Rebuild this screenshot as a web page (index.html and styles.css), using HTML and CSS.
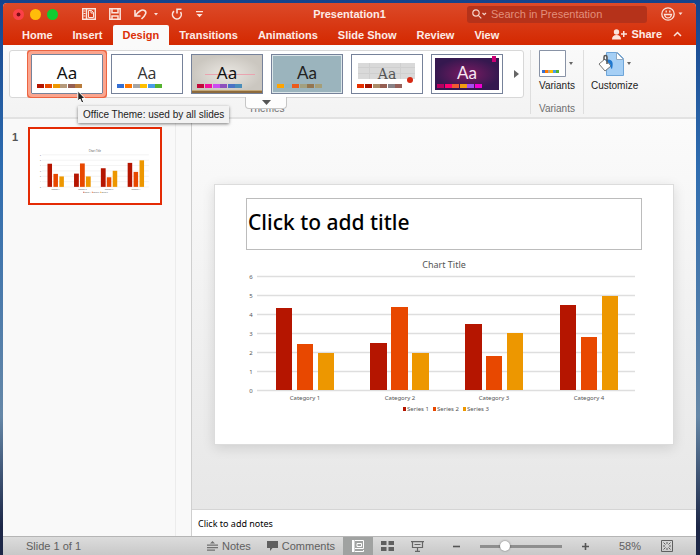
FILE: index.html
```html
<!DOCTYPE html>
<html lang="en">
<head>
<meta charset="UTF-8">
<meta name="viewport" content="width=device-width, initial-scale=1.0">
<title>Presentation1</title>
<link rel="stylesheet" href="styles.css">
</head>
<body>

<div class="window">
  <header class="top">
    <div class="titlebar">
      <div class="lights">
        <button class="light close" aria-label="Close"></button>
        <button class="light minimize" aria-label="Minimize"></button>
        <button class="light zoom" aria-label="Zoom"></button>
      </div>
      <div class="quick">
        <button aria-label="New from template">
          <svg width="14" height="12" viewBox="0 0 14 12" fill="none" stroke="#fbe3dc">
            <path stroke-width="1.4" d="M.7.7h12.6v10.6H.7zM4.5.7v10.6"/>
            <path d="M6.500 2.500h3l2 2v5h-5zM9 2.500v2.500h2.500M1.500 3h2M1.500 5.500h2M1.500 8h2"/>
          </svg>
        </button>
        <button aria-label="Save">
          <svg width="12" height="12" viewBox="0 0 12 12" fill="none" stroke="#fbe3dc" stroke-width="1.5">
            <path d="M.8.8h10.400v10.400H.8zM3 .8v4h6v-4M3 11.200V8h6v3.200"/>
          </svg>
        </button>
        <button aria-label="Undo">
          <svg width="24" height="12" viewBox="0 0 24 12" fill="none" stroke="#fbe3dc" stroke-width="1.6">
            <path d="M1 2v6h5.500M1.500 7.500C4 3.500 8 1 10.500 2.500S12 7 7.500 11"/>
            <path fill="#fbe3dc" stroke="none" d="M20 5h4l-2 2.500z"/>
          </svg>
        </button>
        <button aria-label="Repeat">
          <svg width="12" height="12" viewBox="0 0 12 12" fill="none" stroke="#fbe3dc" stroke-width="1.6">
            <path d="M3 3.200a4.400 4.400 0 1 0 6.500.8M6 5.500V1.200h4.500"/>
          </svg>
        </button>
        <button aria-label="Customize toolbar">
          <svg width="7" height="7" viewBox="0 0 7 7" fill="#fbe3dc"><path d="M0 0h7v1.200H0zM.5 3h6l-3 3.200z"/></svg>
        </button>
      </div>
      <h1 class="doc-title">Presentation1</h1>
      <label class="search">
        <svg width="15" height="10" viewBox="0 0 15 10" fill="none" stroke="#f6d3c9" stroke-width="1.200">
          <circle cx="4" cy="4" r="3.200"/><path d="M6.300 6.300l3 3M10.500 4l1.700 1.700L14 4"/>
        </svg>
        <input type="search" aria-label="Search in Presentation" placeholder="Search in Presentation">
      </label>
      <button class="smiley" aria-label="Feedback">
        <svg width="22" height="14" viewBox="0 0 22 14" fill="none" stroke="#fbe3dc" stroke-width="1.300">
          <circle cx="7" cy="7" r="6.200"/><path d="M3.500 7.500c.8 4.500 6.200 4.500 7 0z"/>
          <path d="M5.200 3.500v2M8.800 3.500v2"/><path fill="#fbe3dc" stroke="none" d="M17.500 5.500h4l-2 2.500z"/>
        </svg>
      </button>
    </div>

    <nav class="tabs">
      <button class="tab">Home</button>
      <button class="tab">Insert</button>
      <button class="tab active">Design</button>
      <button class="tab">Transitions</button>
      <button class="tab">Animations</button>
      <button class="tab">Slide Show</button>
      <button class="tab">Review</button>
      <button class="tab">View</button>
      <button class="share">
        <svg width="15" height="11" viewBox="0 0 15 11" fill="#fbe3dc">
          <circle cx="4.500" cy="3" r="2.700"/><path d="M0 10.500c0-3 1.500-4.500 4.500-4.500S9 7.500 9 10.500z"/><path d="M11 2h1.500v2.300H15v1.400h-2.500V8H11V5.700H9V4.300h2z"/>
        </svg>
        Share
      </button>
      <button class="collapse" aria-label="Collapse ribbon">
        <svg width="9" height="6" viewBox="0 0 9 6" fill="none" stroke="#fbe3dc" stroke-width="1.500"><path d="M1 5l3.500-3.500L8 5"/></svg>
      </button>
    </nav>
  </header>

  <section class="ribbon">
    <div class="group themes">
      <div class="gallery">
        <button class="theme selected" aria-label="Office Theme">
          <svg viewBox="0 0 70 38">
            <rect width="70" height="38" fill="#fff"/>
            <text class="aa noto" x="35" y="24">Aa</text>
            <path fill="#b51500" d="M5 29h7v4H5z"/><path fill="#e84800" d="M13 29h7v4h-7z"/><path fill="#ed9700" d="M21 29h7v4h-7z"/>
            <path fill="#b69a7c" d="M28 29h7v4h-7z"/><path fill="#955f53" d="M36 29h7v4h-7z"/><path fill="#b97c3c" d="M43 29h7v4h-7z"/>
          </svg>
        </button>
        <button class="theme" aria-label="Office Theme, blue">
          <svg viewBox="0 0 70 38">
            <rect width="70" height="38" fill="#fff"/>
            <text class="aa light-face" x="35" y="24">Aa</text>
            <path fill="#356fd3" d="M5 29h7v4H5z"/><path fill="#ff7800" d="M13 29h7v4h-7z"/><path fill="#a5a5a5" d="M21 29h7v4h-7z"/>
            <path fill="#ffc000" d="M28 29h7v4h-7z"/><path fill="#4a9be8" d="M36 29h7v4h-7z"/><path fill="#55b32f" d="M43 29h7v4h-7z"/>
          </svg>
        </button>
        <button class="theme" aria-label="Gallery">
          <svg viewBox="0 0 70 38">
            <defs><radialGradient id="wall"><stop stop-color="#ebe8e3"/><stop offset="1" stop-color="#cbc7c0"/></radialGradient></defs>
            <rect width="70" height="38" fill="url(#wall)"/>
            <path fill="#8d6b3d" d="M0 35h70v3H0z"/><path fill="#c3a777" d="M0 35h70v1H0z"/>
            <path stroke="#e9a4b0" d="M13 19.500h50"/>
            <text class="aa noto" x="35" y="24">Aa</text>
            <path fill="#c2073a" d="M5 29h7v4H5z"/><path fill="#f0119c" d="M13 29h7v4h-7z"/><path fill="#cb4cf2" d="M21 29h7v4h-7z"/>
            <path fill="#8e50bd" d="M28 29h7v4h-7z"/><path fill="#4a72c5" d="M36 29h7v4h-7z"/><path fill="#4a8dba" d="M43 29h7v4h-7z"/>
          </svg>
        </button>
        <button class="theme" aria-label="Parcel">
          <svg viewBox="0 0 70 38">
            <path fill="#dbe6e9" d="M0 0h70v38H0z"/><path fill="#9bb4bd" d="M1 1h68v36H1z"/>
            <text class="aa gill" x="35" y="24">Aa</text>
            <path fill="#ffa300" d="M5 29h7v4H5z"/><path fill="#8fb3c2" d="M13 29h7v4h-7z"/><path fill="#eb5a1d" d="M20 29h7v4h-7z"/>
            <path fill="#a2a080" d="M28 29h7v4h-7z"/><path fill="#94764f" d="M35 29h7v4h-7z"/><path fill="#a59e78" d="M43 29h7v4h-7z"/>
          </svg>
        </button>
        <button class="theme" aria-label="Wood Type">
          <svg viewBox="0 0 70 38">
            <rect width="70" height="38" fill="#fff"/><path fill="#d9d9d9" d="M6 8h57v16H6z"/>
            <path stroke="#cfcfcf" d="M6 12.500h57M6 18.500h57M17.500 8v16M48.500 8v16"/>
            <text class="aa slab" x="35" y="24">Aa</text>
            <path fill="#e63000" d="M5 29h7v4H5z"/><path fill="#a51300" d="M13 29h7v4h-7z"/><path fill="#aa8c68" d="M21 29h7v4h-7z"/>
            <path fill="#955f53" d="M28 29h7v4h-7z"/><path fill="#888287" d="M36 29h7v4h-7z"/><path fill="#96605a" d="M43 29h7v4h-7z"/>
            <circle cx="58" cy="25" r="3" fill="#d62914"/>
          </svg>
        </button>
        <button class="theme" aria-label="Ion Boardroom">
          <svg viewBox="0 0 70 38">
            <defs><radialGradient id="ion"><stop stop-color="#7b1a62"/><stop offset="1" stop-color="#35184f"/></radialGradient></defs>
            <rect width="70" height="38" fill="#fff"/><path fill="url(#ion)" d="M3 3h64v32H3z"/>
            <text class="aa inverse" x="35" y="24">Aa</text>
            <path fill="#b8005f" d="M5 29h7v4H5z"/><path fill="#ff0071" d="M13 29h7v4h-7z"/><path fill="#f25a32" d="M20 29h7v4h-7z"/>
            <path fill="#f39c12" d="M28 29h7v4h-7z"/><path fill="#a64ef0" d="M35 29h7v4h-7z"/><path fill="#f000d0" d="M43 29h7v4h-7z"/>
            <path fill="#c90075" d="M60 1h4v6h-4z"/>
          </svg>
        </button>
        <button class="next" aria-label="More themes">
          <svg width="5" height="8" viewBox="0 0 5 8" fill="#666"><path d="M0 0l5 4-5 4z"/></svg>
        </button>
      </div>
      <span class="group-name">Themes</span>
      <button class="expand" aria-label="Show all themes">
        <svg width="9" height="5" viewBox="0 0 9 5" fill="#555"><path d="M0 0h9L4.500 5z"/></svg>
      </button>
      <div class="tooltip" role="tooltip">Office Theme: used by all slides</div>
      <svg class="cursor" width="9" height="14" viewBox="0 0 9 14"><path fill="#222" stroke="#fff" d="M.8 1v10l2.300-2 1.600 4 2-1-1.600-3.500h3z"/></svg>
    </div>
    <div class="group variants">
      <button class="big">
        <svg width="35" height="27" viewBox="0 0 35 27">
          <path fill="#fff" stroke="#8993a6" d="M.5.5h26v26H.5z"/>
          <path fill="#356fd3" d="M3 20h3v3H3z"/><path fill="#ff7800" d="M6 20h3v3H6z"/><path fill="#a5a5a5" d="M9 20h2v3H9z"/>
          <path fill="#ffc000" d="M11 20h3v3h-3z"/><path fill="#4a9be8" d="M14 20h3v3h-3z"/><path fill="#55b32f" d="M17 20h3v3h-3z"/>
          <path fill="#666" d="M30 12h4l-2 3z"/>
        </svg>
        Variants
      </button>
      <span class="group-name">Variants</span>
    </div>
    <div class="group customize">
      <button class="big">
        <svg width="34" height="27" viewBox="0 0 34 27">
          <path fill="#a5cff5" stroke="#6ea5d8" d="M8.500 2.500h11l6 6v17h-17z"/><path fill="#fff" stroke="#8fa9c2" d="M18.500 2.500v7h7z"/>
          <path fill="#fff" stroke="#777" d="M1 14l6-5 6 7-6 5z"/><path fill="#1f78cf" d="M7 10c7-2 9 2 7 9-2-1-1-4-2-5z"/>
          <path fill="none" stroke="#555" stroke-width="1.500" d="M9 14V7c0-2-3-2-3 0v3"/>
          <path fill="#666" d="M29 12h4l-2 3z"/>
        </svg>
        Customize
      </button>
    </div>
  </section>

  <main class="workspace">
    <aside class="slides">
      <span class="slide-number">1</span>
      <button class="thumb" aria-label="Slide 1">
        <svg viewBox="0 0 460 262"><use href="#chart" x="32" y="65"/></svg>
      </button>
    </aside>
    <div class="scroller"></div>
    <div class="editor">
      <div class="canvas">
        <article class="slide">
          <div class="title-box">Click to add title</div>
          <svg class="chart" viewBox="0 0 396 194" role="img" aria-label="Chart Title">
            <!-- also drawn in the slide thumbnail -->
            <g id="chart">
              <path stroke="#dedede" stroke-width="1.300" d="M11 26.500H389M11 45.500H389M11 64.500H389M11 83.500H389M11 102.500H389M11 121.500H389M11 140.500H389"/>
              <g fill="#b51500">
                <rect x="30" y="58" width="16" height="82"/>
                <rect x="124" y="93" width="17" height="47"/>
                <rect x="219" y="74" width="17" height="66"/>
                <rect x="314" y="55" width="16" height="85"/>
              </g>
              <g fill="#e84800">
                <rect x="51" y="94" width="16" height="46"/>
                <rect x="145" y="57" width="17" height="83"/>
                <rect x="240" y="106" width="16" height="34"/>
                <rect x="335" y="87" width="16" height="53"/>
              </g>
              <g fill="#ed9700">
                <rect x="72" y="103" width="16" height="37"/>
                <rect x="166" y="103" width="17" height="37"/>
                <rect x="261" y="83" width="16" height="57"/>
                <rect x="356" y="46" width="16" height="94"/>
              </g>
              <g class="chart-text">
                <text class="chart-title" x="198" y="18">Chart Title</text>
                <text x="5" y="29">6</text>
                <text x="5" y="48">5</text>
                <text x="5" y="67">4</text>
                <text x="5" y="86">3</text>
                <text x="5" y="105">2</text>
                <text x="5" y="124">1</text>
                <text x="5" y="143">0</text>
                <text x="59" y="150">Category 1</text>
                <text x="154" y="150">Category 2</text>
                <text x="248" y="150">Category 3</text>
                <text x="343" y="150">Category 4</text>
                <text x="172" y="161">Series 1</text>
                <text x="202" y="161">Series 2</text>
                <text x="232" y="161">Series 3</text>
              </g>
              <path fill="#b51500" d="M157 157h3v4h-3z"/>
              <path fill="#e84800" d="M187 157h3v4h-3z"/>
              <path fill="#ed9700" d="M217 157h3v4h-3z"/>
            </g>
          </svg>
        </article>
      </div>
      <div class="notes">Click to add notes</div>
    </div>
  </main>

  <footer class="status">
    <span class="count">Slide 1 of 1</span>
    <button class="notes-button">
      <svg width="11" height="10" viewBox="0 0 11 10" fill="#707070"><path d="M5.500 0L8 2.500H3zM0 3.500h11v1.200H0zM0 6h11v1.200H0zM0 8.500h8v1.200H0z"/></svg>
      Notes
    </button>
    <button class="comments-button">
      <svg width="11" height="10" viewBox="0 0 11 10" fill="#606060"><path d="M0 0h11v7H5.500L3 10V7H0z"/></svg>
      Comments
    </button>
    <button class="view current" aria-label="Normal view">
      <svg width="12" height="12" viewBox="0 0 12 12" fill="none" stroke="#fff"><path d="M3 .5h8.500v8H3M3 11.500h8.500V10M5 3.500h4.500v3H5z"/><path fill="#fff" stroke="none" d="M0 0h2.500v12H0z"/></svg>
    </button>
    <button class="view" aria-label="Slide sorter">
      <svg width="13" height="10" viewBox="0 0 13 10" fill="#606060"><path d="M0 0h5.500v4H0zM7.500 0H13v4H7.500zM0 6h5.500v4H0zM7.500 6H13v4H7.500z"/></svg>
    </button>
    <button class="view" aria-label="Slide show">
      <svg width="13" height="11" viewBox="0 0 13 11" fill="none" stroke="#666"><path stroke-width="1.200" d="M0 .6h13M1.500 1v5.500h10V1M6.500 6.500v3.500M4 10.400h5M3.500 3.500h6"/></svg>
    </button>
    <button class="step" aria-label="Zoom out">
      <svg width="7" height="7" viewBox="0 0 7 7"><path stroke="#555" stroke-width="1.600" d="M0 3.500h7"/></svg>
    </button>
    <input class="zoom-range" type="range" min="10" max="400" value="118" aria-label="Zoom">
    <button class="step plus" aria-label="Zoom in">
      <svg width="7" height="7" viewBox="0 0 7 7"><path stroke="#555" stroke-width="1.600" d="M0 3.500h7M3.500 0v7"/></svg>
    </button>
    <span class="percent">58%</span>
    <button class="fit" aria-label="Fit to window">
      <svg width="12" height="12" viewBox="0 0 12 12" fill="none" stroke="#606060"><path d="M.5.5h11v11H.5zM2.500 2.500l2 2M9.500 2.500l-2 2M2.500 9.500l2-2M9.500 9.500l-2-2M6 2v2M6 8v2M2 6h2M8 6h2"/></svg>
    </button>
  </footer>
</div>

</body>
</html>
```
FILE: styles.css
```css
* {
  box-sizing: border-box;
}
html, body {
  margin: 0;
  height: 100%;
}
body {
  padding: 3px 4px 0 3px;
  background: linear-gradient(#14438c, #2f6db0 30%, #6688a8 75%, #1d2747 95%);
  font-family: "Liberation Sans", Arial, sans-serif;
  font-size: 11px;
  overflow: hidden;
}
button {
  border: none;
  padding: 0;
  background: none;
  font: inherit;
  color: inherit;
}
svg {
  display: block;
  flex: none;
}
.window {
  height: 100%;
  display: flex;
  flex-direction: column;
  background: #f9f9f9;
  border-radius: 4px 4px 0 0;
}

/* Title bar and tabs */
.top {
  background: linear-gradient(#dc4a29, #d42800);
  border-radius: 4px 4px 0 0;
  color: #fdebe6;
}
.titlebar {
  position: relative;
  display: grid;
  grid-template-columns: 69px 1fr 180px 36px;
  align-items: center;
  height: 22px;
  padding: 0 13px 0 10px;
}
.lights {
  display: flex;
  gap: 6px;
}
.light {
  width: 11px;
  height: 11px;
  border-radius: 50%;
}
.close {
  background: radial-gradient(#7c0d16 20%, #fb4048 30%);
}
.minimize {
  background: #ffbd0a;
}
.zoom {
  background: #0fcb31;
}
.quick {
  display: flex;
  align-items: center;
  gap: 13px;
}
.doc-title {
  position: absolute;
  left: 0;
  right: 0;
  margin: 0;
  text-align: center;
  font-size: 11px;
  pointer-events: none;
}
.search {
  display: flex;
  align-items: center;
  gap: 4px;
  height: 17px;
  padding: 0 5px;
  border-radius: 3px;
  background: #b5321a;
}
.search input {
  flex: 1;
  min-width: 0;
  padding: 0;
  border: none;
  outline: none;
  background: none;
  font: inherit;
  color: #fff;
}
.search input::placeholder {
  color: #e38f7b;
}
.smiley {
  justify-self: end;
}
.tabs {
  display: flex;
  height: 20px;
  padding-left: 9px;
  font-weight: bold;
}
.tab {
  padding: 0 10px;
  white-space: nowrap;
}
.tab.active {
  background: #fafafa;
  color: #dc3008;
  border-radius: 2px 2px 0 0;
}
.share {
  display: flex;
  align-items: center;
  gap: 4px;
  height: 18px;
  margin-left: auto;
}
.collapse {
  height: 18px;
  margin: 0 14px 0 11px;
}

/* Ribbon */
.ribbon {
  display: flex;
  height: 74px;
  padding: 5px 6px 3px;
  background: linear-gradient(#fafafa, #f3f3f3);
  border-bottom: 2px solid #e2e2e2;
  font-size: 10px;
}
.group {
  position: relative;
  display: flex;
  flex-direction: column;
}
.gallery {
  display: flex;
  align-items: center;
  height: 48px;
  padding-left: 21px;
  gap: 8px;
  background: #fff;
  border: 1px solid #d8d8d8;
  border-radius: 3px;
}
.theme {
  width: 72px;
  border: 1px solid #76829a;
}
.theme.selected {
  outline: 3px solid #fba58e;
  box-shadow: 0 0 0 4px #ec6542;
  border-radius: 1px;
}
.aa {
  font-size: 17px;
  text-anchor: middle;
  fill: #111;
}
.noto {
  font-family: "Noto Sans", sans-serif;
}
.light-face {
  font-family: "Open Sans", sans-serif;
  font-size: 16px;
  fill: #333;
}
.gill {
  font-family: Lato, sans-serif;
  fill: #222;
}
.slab {
  font-family: "DejaVu Serif", serif;
  font-size: 14px;
  fill: #555;
}
.inverse {
  font-family: Lato, sans-serif;
  fill: #f6e8f3;
}
.next {
  padding: 0 4px 0 3px;
}
.group-name {
  margin-top: auto;
  text-align: center;
  color: #6e6e6e;
}
.expand {
  position: absolute;
  left: 236px;
  top: 47px;
  width: 42px;
  height: 12px;
  padding: 0 0 0 16px;
  background: #fdfdfd;
  border: 1px solid #c6c6c6;
  border-top: none;
  border-radius: 0 0 4px 4px;
}
.tooltip {
  position: absolute;
  left: 69px;
  top: 56px;
  z-index: 2;
  padding: 0 5px;
  line-height: 17px;
  white-space: nowrap;
  background: #f2f2f2;
  box-shadow: 0 1px 3px rgba(0, 0, 0, 0.5);
  color: #1c1c1c;
}
.cursor {
  position: absolute;
  left: 68px;
  top: 40px;
  z-index: 3;
}
.variants {
  margin-left: 6px;
  padding: 0 8px;
  border-left: 1px solid #dedede;
  border-right: 1px solid #dedede;
}
.customize {
  padding-left: 7px;
}
.big {
  display: flex;
  flex-direction: column;
  align-items: center;
  gap: 3px;
  color: #1c1c1c;
}

/* Slide list and editor */
.workspace {
  flex: 1;
  min-height: 0;
  display: flex;
}
.slides {
  display: flex;
  align-items: flex-start;
  width: 172px;
  padding: 8px 13px 0 9px;
  gap: 10px;
}
.slide-number {
  padding-top: 4px;
  font-weight: bold;
  color: #555;
}
.thumb {
  flex: 1;
  border: 2px solid #e42b05;
  background: #fff;
}
.scroller {
  width: 17px;
  border-left: 1px solid #ececec;
  border-right: 1px solid #cfcfcf;
}
.editor {
  flex: 1;
  display: flex;
  flex-direction: column;
}
.canvas {
  flex: 1;
  display: flex;
  flex-direction: column;
  justify-content: center;
  padding: 0 22px;
  background: linear-gradient(#fbfbfb, #e7e7e7);
  border-bottom: 1px solid #d5d5d5;
}
.slide {
  padding: 13px 31px 0;
  background: #fff;
  border: 1px solid #dcdcdc;
  box-shadow: 0 3px 12px rgba(0, 0, 0, 0.12);
}
.title-box {
  padding: 0 1px 4px;
  line-height: 46px;
  border: 1px solid #bcbcbc;
  font-family: "Noto Sans", sans-serif;
  font-size: 21px;
  font-weight: 500;
  color: #000;
}
.chart-text {
  font-family: "Noto Sans", sans-serif;
  font-size: 6px;
  text-anchor: middle;
  fill: #555;
}
.chart-title {
  font-size: 9px;
}
.notes {
  height: 26px;
  padding: 0 6px;
  line-height: 28px;
  background: #fff;
  font-family: "Noto Sans", sans-serif;
  font-size: 9px;
  color: #000;
}

/* Status bar */
.status {
  display: flex;
  align-items: center;
  height: 19px;
  padding: 0 23px;
  background: linear-gradient(#dcdcdc, #c8c8c8);
  border-top: 1px solid #b5b5b5;
  color: #606060;
}
.count {
  margin-right: auto;
}
.status button {
  display: flex;
  align-items: center;
  justify-content: center;
  gap: 4px;
}
.status .notes-button {
  margin-right: 16px;
}
.status .comments-button {
  margin-right: 8px;
}
.view {
  width: 30px;
  height: 18px;
}
.view.current {
  background: #a0a2a1;
}
.step {
  margin-left: 20px;
}
.zoom-range {
  appearance: none;
  width: 82px;
  height: 11px;
  margin: 0 0 0 20px;
  background: linear-gradient(#8e8e8e, #8e8e8e) center / 100% 3px no-repeat;
}
.zoom-range::-webkit-slider-thumb {
  appearance: none;
  width: 10px;
  height: 10px;
  border-radius: 50%;
  background: #fff;
  box-shadow: 0 0 2px rgba(0, 0, 0, 0.5);
}
.percent {
  margin: 0 20px 0 30px;
}
```
